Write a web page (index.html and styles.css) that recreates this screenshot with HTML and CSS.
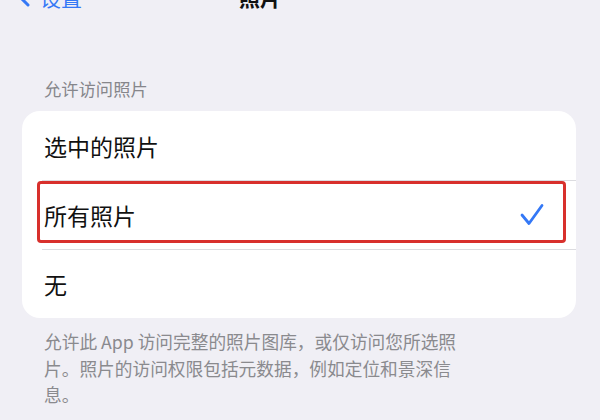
FILE: index.html
```html
<!DOCTYPE html>
<html lang="zh-CN">
<head>
<meta charset="utf-8">
<link rel="stylesheet" href="styles.css">
</head>
<body>
<div class="nav">
  <div class="back">
    <svg class="chev" width="12" height="20" viewBox="0 0 12 20"><path d="M10 2 L2 10 L10 18" fill="none" stroke="#3478f6" stroke-width="3" stroke-linecap="round" stroke-linejoin="round"/></svg>
    <span>设置</span>
  </div>
  <div class="title">照片</div>
</div>
<div class="section-head">允许访问照片</div>
<div class="card">
  <div class="row">选中的照片</div>
  <div class="row sep selected">
    <span>所有照片</span>
    <svg class="check" width="24" height="24" viewBox="0 0 24 24"><path d="M2 12 L9 20.5 L22 2.5" fill="none" stroke="#3478f6" stroke-width="2.8" stroke-linecap="round" stroke-linejoin="round"/></svg>
    <div class="mark"></div>
  </div>
  <div class="row sep">无</div>
</div>
<p class="footer">允许此 App 访问完整的照片图库，或仅访问您所选照片。照片的访问权限包括元数据，例如定位和景深信息。</p>
</body>
</html>
```
FILE: styles.css
```css
html, body {
  margin: 0;
  padding: 0;
  background: #f0eff5;
  font-family: "Noto Sans CJK SC", "Noto Sans", sans-serif;
  color: #111;
}
body {
  width: 600px;
  height: 420px;
  overflow: hidden;
}
.nav {
  display: flex;
  align-items: center;
  height: 30px;
  margin-top: -18px;
  padding-left: 18px;
}
.back {
  display: flex;
  align-items: center;
  gap: 10px;
  color: #3478f6;
  font-size: 21px;
  line-height: 30px;
}
.title {
  margin-left: 157px;
  font-size: 21px;
  font-weight: 700;
  line-height: 30px;
}
.section-head {
  margin: 65px 0 0 44px;
  font-size: 17.3px;
  line-height: 24px;
  color: #86868b;
}
.card {
  margin: 10px 24px 0 22px;
  background: #fff;
  border-radius: 18px;
}
.row {
  position: relative;
  height: 69px;
  display: flex;
  align-items: center;
  justify-content: space-between;
  padding: 0 32px 0 22px;
  font-size: 23px;
}
.row.sep::before {
  content: "";
  position: absolute;
  top: 0;
  left: 20px;
  right: 0;
  height: 1px;
  background: #dcdce0;
}
.check {
  display: block;
}
.mark {
  position: absolute;
  left: 15px;
  right: 10px;
  top: 1px;
  height: 62px;
  border: 3px solid #d8302c;
  border-radius: 4px;
  box-sizing: border-box;
}
.footer {
  margin: 10px 0 0 44px;
  width: 418px;
  font-size: 17.7px;
  line-height: 26.5px;
  color: #8a8a8e;
}
```
